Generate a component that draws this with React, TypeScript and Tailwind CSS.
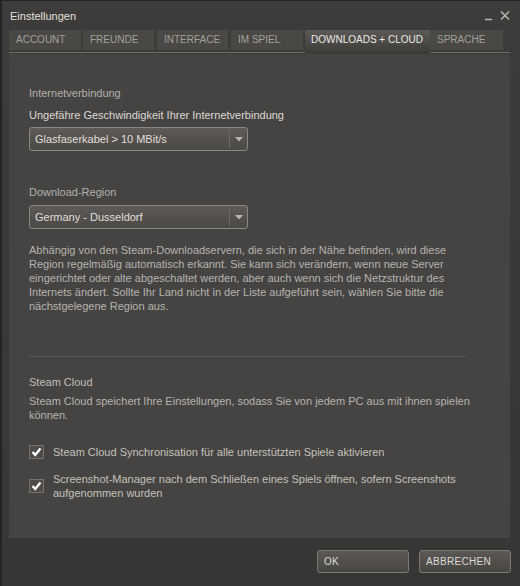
import { useState } from "react";

const tabs = ["ACCOUNT", "FREUNDE", "INTERFACE", "IM SPIEL", "DOWNLOADS + CLOUD", "SPRACHE"];
const tabWidths = ["w-[72px]", "w-[71px] ml-[2px]", "w-[71px] ml-[3px]", "w-[72px] ml-[3px]", "w-[125px] ml-[2px]", "w-[73px]"];

function Dropdown({ value }: { value: string }) {
    return (
        <div className="flex w-[219px] h-[24px] items-stretch rounded-[3px] border border-[#8a8682] bg-gradient-to-b from-[#5e5b58] to-[#4a4845]">
            <div className="flex-1 flex items-center pl-[5px] text-[#e2dfdb]">{value}</div>
            <div className="w-px my-[2px] bg-[#3a3836] border-r border-[#6e6b67]"></div>
            <div className="w-[17px] flex items-center justify-center">
                <svg width="8" height="5" viewBox="0 0 8 5">
                    <path d="M0 0 L8 0 L4 4.5 Z" fill="#b9b6b1" />
                </svg>
            </div>
        </div>
    );
}

function Checkbox({ checked, children }: { checked: boolean; children: React.ReactNode }) {
    return (
        <div className="flex items-center">
            <div className="w-[15px] h-[14px] flex-none flex items-center justify-center border border-[#75726e] bg-[#4e4b48]">
                {checked && (
                    <svg width="11" height="10" viewBox="0 0 11 10">
                        <path d="M1.5 5 L4.2 8 L9.5 1.5" stroke="#ffffff" strokeWidth="2.4" fill="none" />
                    </svg>
                )}
            </div>
            <div className="ml-[9px] w-[413px] text-[#c4c1bc]">{children}</div>
        </div>
    );
}

export default function App() {
    const [active] = useState(4);
    return (
        <div className="w-[520px] h-[586px] flex flex-col bg-gradient-to-b from-[#3e3c3a] to-[#383634] border-l-2 border-t border-[#252423] font-['Liberation_Sans',Arial,sans-serif] text-[11px] leading-[14px]">
            <div className="flex items-start justify-between h-[28px]">
                <div className="pl-[8px] pt-[8px] text-[#e3e0dc]">Einstellungen</div>
                <div className="flex items-start pr-[10px] pt-[10px] gap-[7px]">
                    <svg width="8" height="10" viewBox="0 0 8 10">
                        <path d="M0 8.5 L7 8.5" stroke="#b8b5b0" strokeWidth="1.5" />
                    </svg>
                    <svg width="10" height="9" viewBox="0 0 10 9">
                        <path d="M1 0.5 L9 8.5 M9 0.5 L1 8.5" stroke="#b8b5b0" strokeWidth="1.5" />
                    </svg>
                </div>
            </div>
            <div className="mx-[7px] w-[501px] h-[24px] flex items-end border-b border-[#6d6a66] text-[10px]">
                {tabs.map((t, i) =>
                    i === active ? (
                        <div
                            key={t}
                            className={`${tabWidths[i]} h-[23px] -mb-px pt-[3px] pl-[6px] bg-gradient-to-b from-[#5c5956] via-[#4d4b48] to-[#3d3b38] text-[#ece9e5]`}>
                            {t}
                        </div>
                    ) : (
                        <div
                            key={t}
                            className={`${tabWidths[i]} h-[20px] mb-[2px] flex items-center pl-[7px] bg-[#4a4845] text-[#a3a09c]`}>
                            {t}
                        </div>
                    )
                )}
            </div>
            <div className="mx-[7px] mt-[1px] w-[501px] h-[484px] bg-[#464442] pl-[20px] pt-[32px] text-[#b6b3ae]">
                <div className="text-[#b3b0ab]">Internetverbindung</div>
                <div className="mt-[8px] text-[#dcd9d5]">Ungefähre Geschwindigkeit Ihrer Internetverbindung</div>
                <div className="mt-[5px]">
                    <Dropdown value="Glasfaserkabel > 10 MBit/s" />
                </div>
                <div className="mt-[34px] text-[#b3b0ab]">Download-Region</div>
                <div className="mt-[6px]">
                    <Dropdown value="Germany - Dusseldorf" />
                </div>
                <p className="mt-[14px] w-[437px]">
                    Abhängig von den Steam-Downloadservern, die sich in der Nähe befinden, wird diese Region regelmäßig
                    automatisch erkannt. Sie kann sich verändern, wenn neue Server eingerichtet oder alte abgeschaltet
                    werden, aber auch wenn sich die Netzstruktur des Internets ändert. Sollte Ihr Land nicht in der Liste
                    aufgeführt sein, wählen Sie bitte die nächstgelegene Region aus.
                </p>
                <div className="mt-[43px] w-[437px] h-px bg-[#5a5753]"></div>
                <div className="mt-[18px] text-[#c2bfba]">Steam Cloud</div>
                <p className="mt-[5px] whitespace-nowrap">
                    Steam Cloud speichert Ihre Einstellungen, sodass Sie von jedem PC aus mit ihnen spielen
                    <br />
                    können.
                </p>
                <div className="mt-[23px]">
                    <Checkbox checked>Steam Cloud Synchronisation für alle unterstützten Spiele aktivieren</Checkbox>
                </div>
                <div className="mt-[13px]">
                    <Checkbox checked>
                        Screenshot-Manager nach dem Schließen eines Spiels öffnen, sofern Screenshots aufgenommen wurden
                    </Checkbox>
                </div>
            </div>
            <div className="flex justify-end gap-[10px] pr-[9px] mt-[12px] text-[10px] tracking-[0.3px]">
                {["OK", "ABBRECHEN"].map((b) => (
                    <button
                        key={b}
                        type="button"
                        className="w-[92px] h-[23px] flex items-center pl-[6px] rounded-[3px] border border-[#7c7975] bg-gradient-to-b from-[#5b5855] to-[#484643] text-[#dedbd7]">
                        {b}
                    </button>
                ))}
            </div>
        </div>
    );
}
